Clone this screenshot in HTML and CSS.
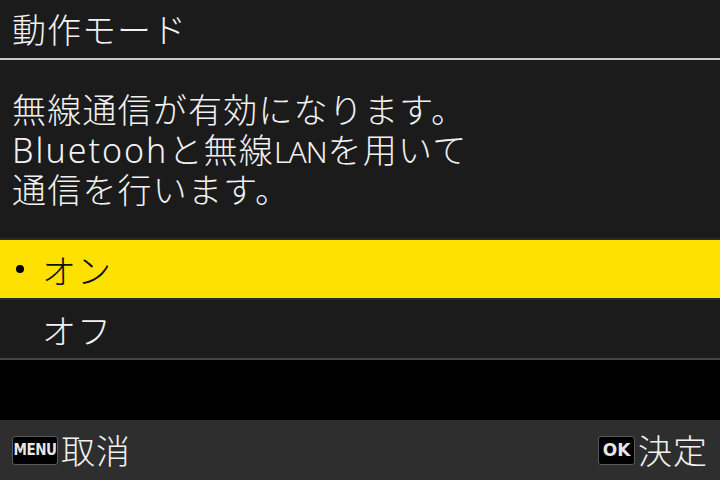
FILE: index.html
```html
<!DOCTYPE html>
<html lang="ja">
<head>
<meta charset="utf-8">
<link rel="stylesheet" href="styles.css">
</head>
<body>
<div class="screen">
  <header class="title-bar">
    <h1 class="title">動作モード</h1>
  </header>
  <section class="desc">
    <p class="desc-line">無線通信が有効になります。</p>
    <p class="desc-line"><span class="latin">Bluetooh</span>と無線<span class="latin-n">LAN</span>を用いて</p>
    <p class="desc-line">通信を行います。</p>
  </section>
  <ul class="options">
    <li class="option selected"><span class="bullet"></span><span class="label">オン</span></li>
    <li class="option"><span class="bullet"></span><span class="label">オフ</span></li>
  </ul>
  <div class="spacer"></div>
  <footer class="footer">
    <div class="action"><span class="key key-menu">MENU</span><span class="action-label">取消</span></div>
    <div class="action"><span class="key key-ok">OK</span><span class="action-label">決定</span></div>
  </footer>
</div>
</body>
</html>
```

FILE: styles.css
```css
html, body {
  margin: 0;
  padding: 0;
  background: #000;
}
.screen {
  width: 720px;
  height: 480px;
  display: flex;
  flex-direction: column;
  overflow: hidden;
  font-family: "Noto Sans CJK JP", sans-serif;
  font-weight: 300;
  color: #f2f2f2;
  background: #1b1b1b;
}
.title-bar {
  height: 58px;
  border-bottom: 2px solid #c8c8c8;
  display: flex;
  align-items: center;
  padding-left: 12px;
  flex: none;
}
.title {
  margin: 0;
  font-size: 34px;
  font-weight: 300;
  line-height: 40px;
  letter-spacing: 1px;
}
.desc {
  height: 180px;
  padding: 29px 0 0 12px;
  box-sizing: border-box;
  border-bottom: 2px solid #2a2a2a;
  flex: none;
  display: flex;
  flex-direction: column;
}
.desc-line {
  margin: 0;
  height: 40px;
  font-size: 34px;
  line-height: 40px;
  letter-spacing: 1.2px;
  white-space: nowrap;
}
.latin {
  font-family: "Noto Sans", sans-serif;
  font-weight: 300;
  font-size: 34px;
  letter-spacing: 2px;
}
.latin-n {
  font-family: "Noto Sans", sans-serif;
  font-weight: 300;
  font-size: 30px;
  letter-spacing: -1px;
  margin-right: 1px;
}
.options {
  list-style: none;
  margin: 0;
  padding: 0;
  flex: none;
}
.option {
  height: 58px;
  display: flex;
  align-items: center;
  padding-left: 16px;
  border-bottom: 2px solid #2a2a2a;
  font-size: 34px;
}
.option:last-child {
  border-bottom-color: #444;
}
.option.selected {
  background: #ffe100;
  color: #111;
}
.bullet {
  width: 8px;
  height: 8px;
  border-radius: 50%;
  margin-right: 18px;
  flex: none;
}
.selected .bullet {
  background: #000;
}
.label {
  line-height: 40px;
  margin-top: 2px;
  letter-spacing: 1px;
}
.spacer {
  height: 60px;
  background: #000;
  flex: none;
}
.footer {
  height: 60px;
  background: #2e2e2e;
  display: flex;
  align-items: center;
  justify-content: space-between;
  padding: 0 12px;
  flex: none;
}
.action {
  display: flex;
  align-items: center;
}
.action-label {
  font-size: 34px;
  line-height: 40px;
  margin-left: 3px;
  letter-spacing: 1px;
}
.key {
  display: flex;
  align-items: center;
  justify-content: center;
  background: #000;
  border: 1px solid #5a5a5a;
  border-radius: 3px;
  box-sizing: border-box;
  height: 29px;
  color: #e6e6e6;
  font-weight: 700;
  font-family: "DejaVu Sans", sans-serif;
}
.key-menu {
  width: 46px;
  font-size: 15px;
  font-stretch: condensed;
  letter-spacing: -0.5px;
}
.key-ok {
  width: 37px;
  font-size: 17px;
}
```
